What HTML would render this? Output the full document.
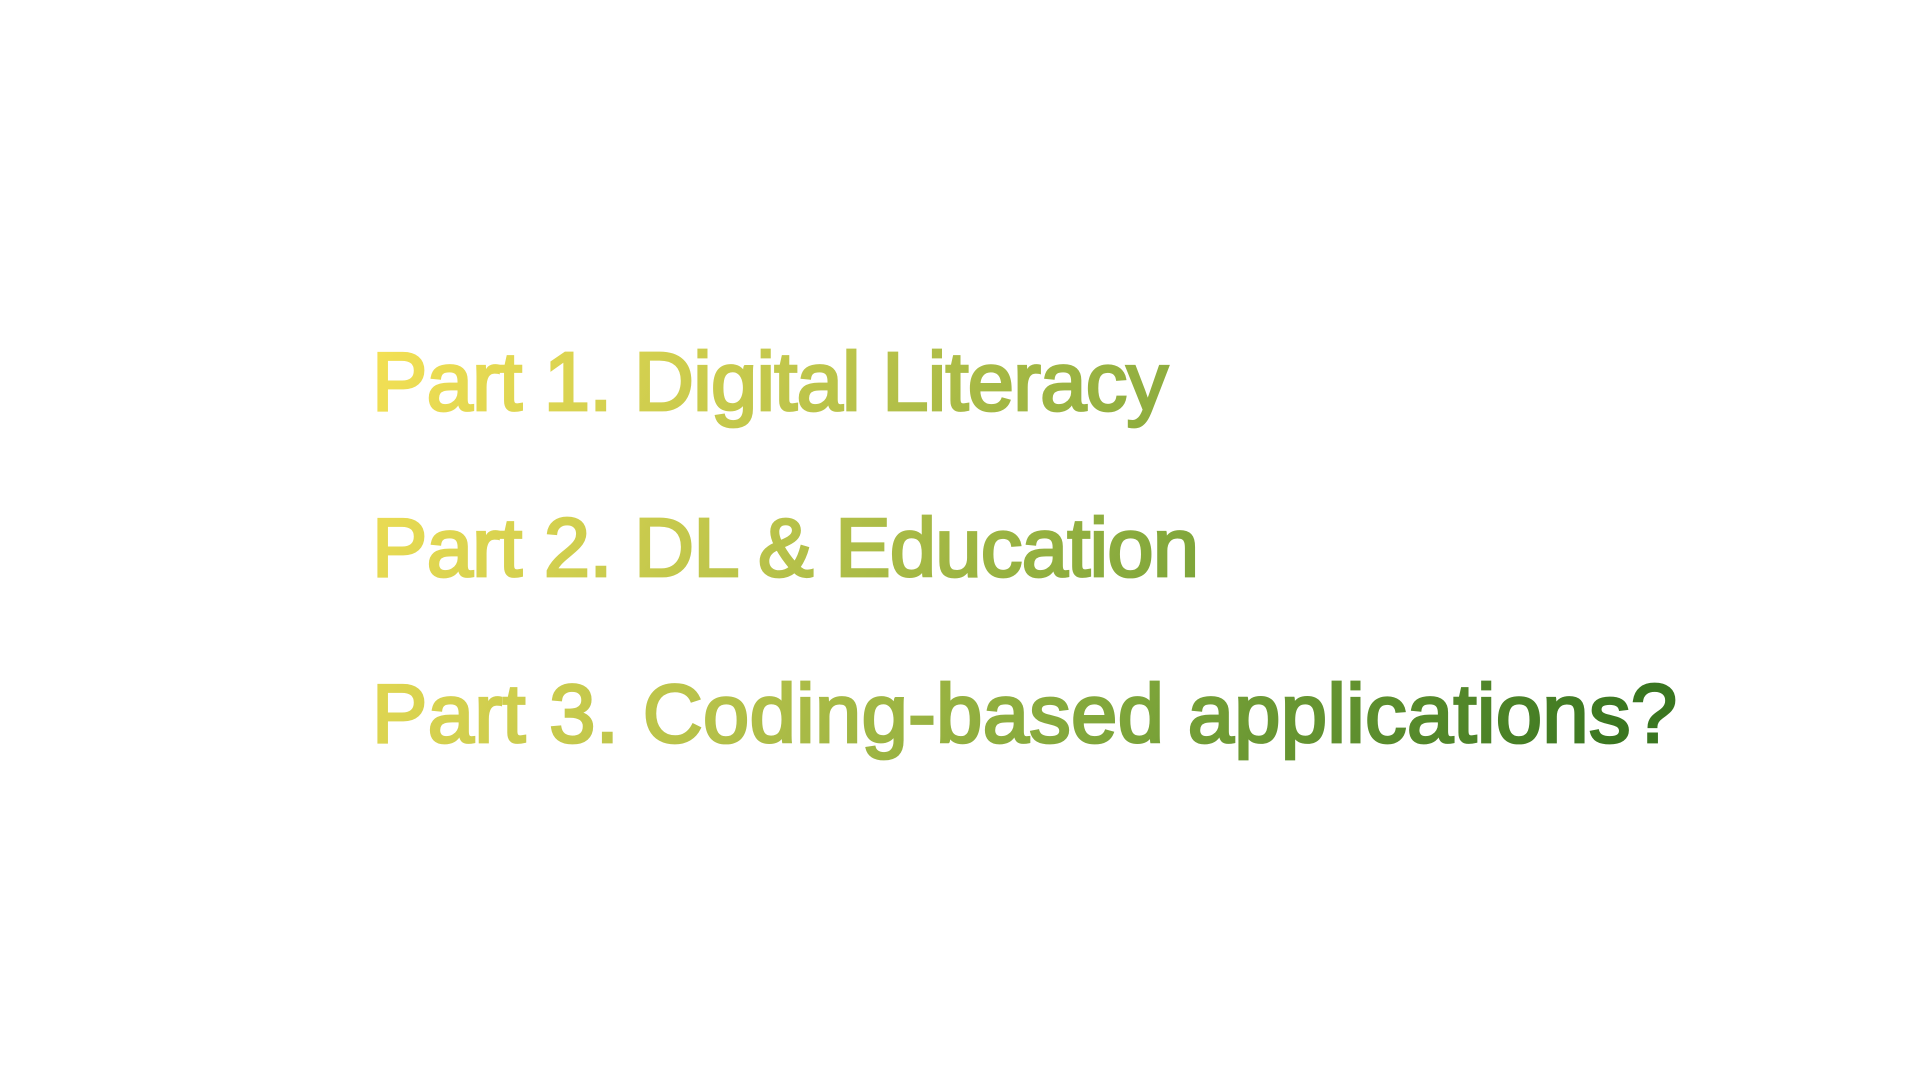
<!DOCTYPE html>
<html><head><meta charset="utf-8"><style>
html,body{margin:0;padding:0;background:#fff;width:1920px;height:1080px;overflow:hidden}
svg{position:absolute;left:0;top:0}
text{font-family:"Liberation Sans",sans-serif;font-weight:normal;font-size:83px}
</style></head><body>
<svg width="1920" height="1080" viewBox="0 0 1920 1080">
<defs>
<linearGradient id="g" gradientUnits="userSpaceOnUse" x1="400" y1="300" x2="1550" y2="880">
<stop offset="0" stop-color="#f3e055"/>
<stop offset="0.35" stop-color="#b8c24a"/>
<stop offset="0.65" stop-color="#7ea53a"/>
<stop offset="1" stop-color="#3a7620"/>
</linearGradient>
</defs>
<g fill="url(#g)" stroke="url(#g)" stroke-width="2.8">
<text x="372" y="410" textLength="796" lengthAdjust="spacing">Part 1. Digital Literacy</text>
<text x="372" y="576" textLength="827" lengthAdjust="spacing">Part 2. DL &amp; Education</text>
<text x="372" y="742" textLength="1305" lengthAdjust="spacing">Part 3. Coding-based applications?</text>
</g>
</svg>
</body></html>
